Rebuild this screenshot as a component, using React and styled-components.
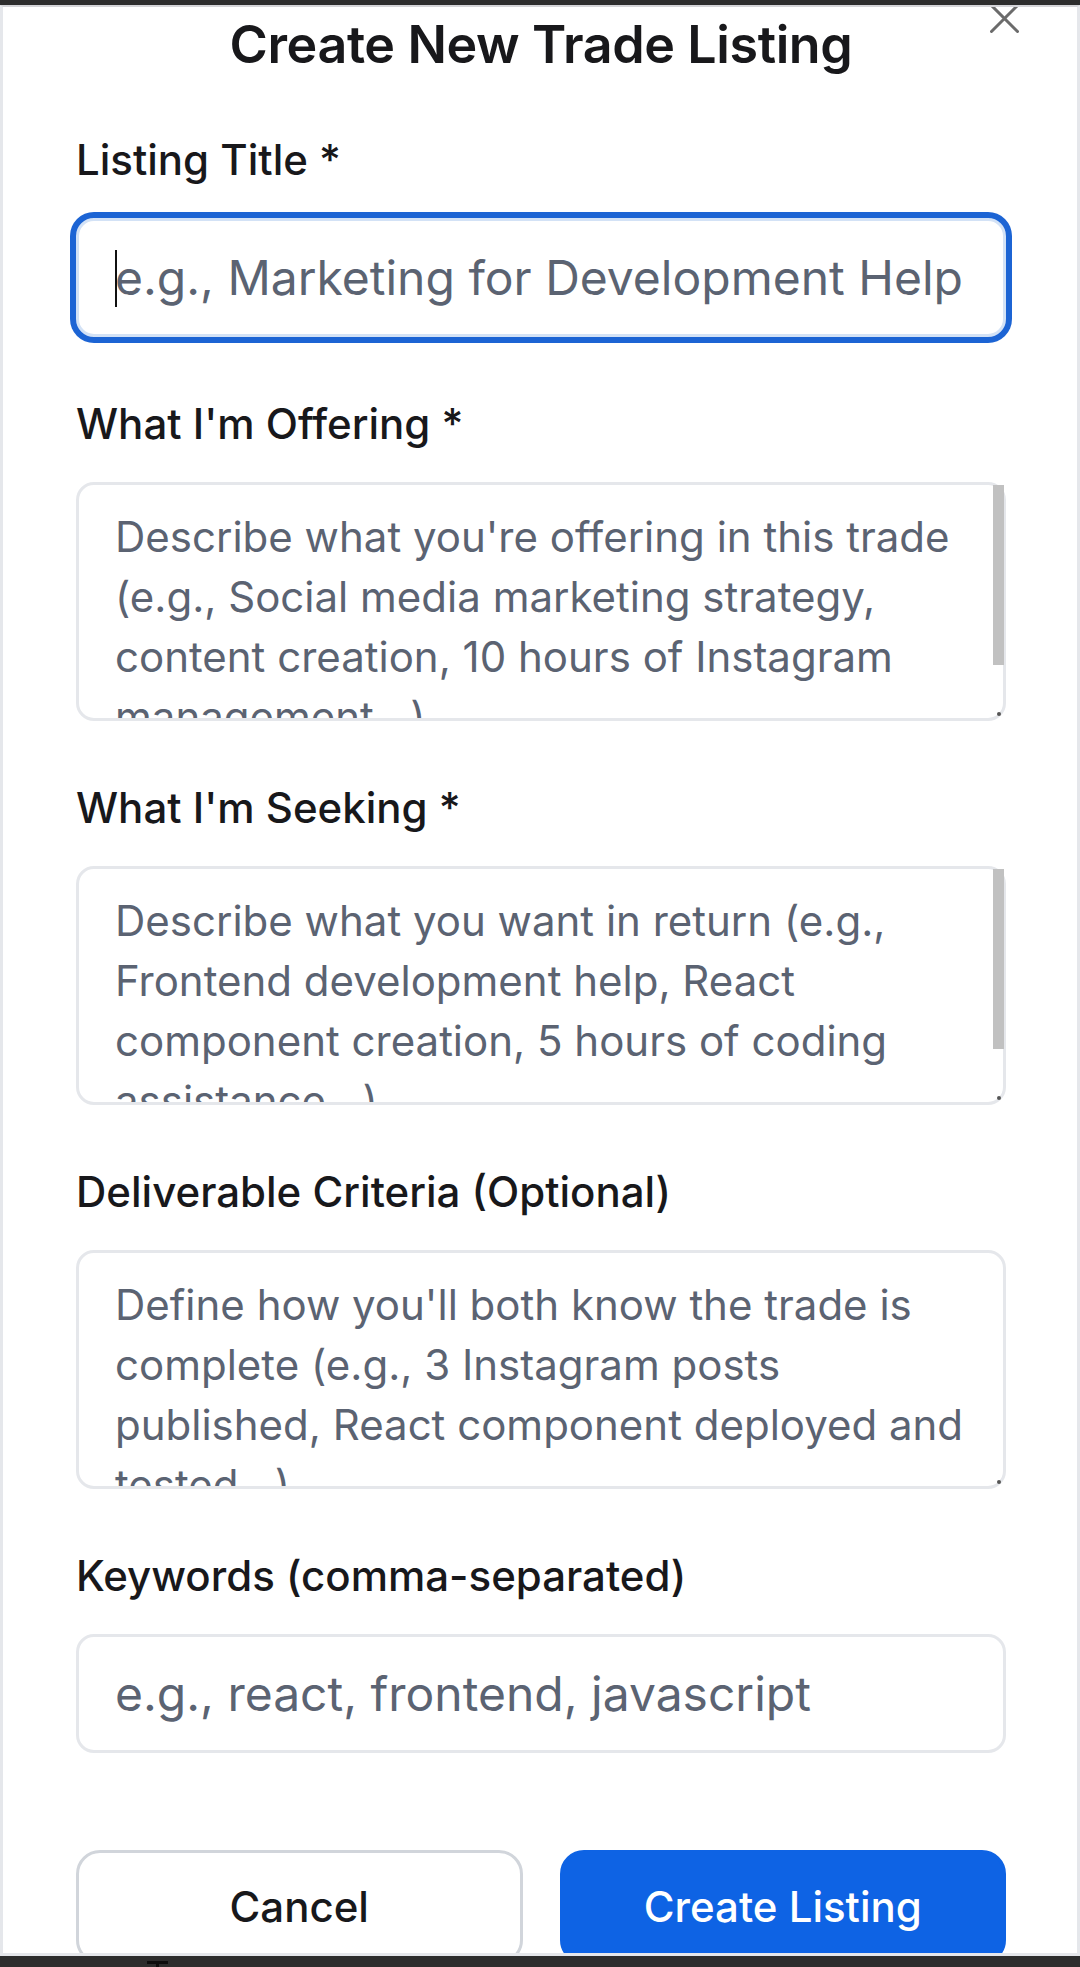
import React from "react";
import styled, { createGlobalStyle, css } from "styled-components";

const GlobalStyle = createGlobalStyle`
  html, body {
    margin: 0;
    padding: 0;
    background: #2d2d2d;
  }
  * {
    box-sizing: border-box;
  }
`;

const fields = [
  {
    id: "offering",
    label: "What I'm Offering *",
    placeholder:
      "Describe what you're offering in this trade (e.g., Social media marketing strategy, content creation, 10 hours of Instagram management...)",
    scroll: true,
  },
  {
    id: "seeking",
    label: "What I'm Seeking *",
    placeholder:
      "Describe what you want in return (e.g., Frontend development help, React component creation, 5 hours of coding assistance...)",
    scroll: true,
  },
  {
    id: "criteria",
    label: "Deliverable Criteria (Optional)",
    placeholder:
      "Define how you'll both know the trade is complete (e.g., 3 Instagram posts published, React component deployed and tested...)",
    scroll: false,
  },
];

export default function App() {
  return (
    <>
      <GlobalStyle />
      <Screen>
        <Panel>
          <CloseButton aria-label="Close">
            <svg width="29" height="29" viewBox="0 0 29 29">
              <path
                d="M1.5 1.5 L27.5 27.5 M27.5 1.5 L1.5 27.5"
                stroke="#6b6b6b"
                strokeWidth="3"
                strokeLinecap="round"
              />
            </svg>
          </CloseButton>
          <Content>
            <Title>Create New Trade Listing</Title>

            <Field>
              <Label htmlFor="title">Listing Title *</Label>
              <InputWrap>
                <Input
                  id="title"
                  $focused
                  placeholder="e.g., Marketing for Development Help"
                />
                <Caret />
              </InputWrap>
            </Field>

            {fields.map((f) => (
              <Field key={f.id}>
                <Label htmlFor={f.id}>{f.label}</Label>
                <AreaWrap>
                  <TextArea id={f.id} rows={3} placeholder={f.placeholder} />
                  {f.scroll && <ScrollThumb />}
                </AreaWrap>
              </Field>
            ))}

            <Field>
              <Label htmlFor="keywords">Keywords (comma-separated)</Label>
              <InputWrap>
                <Input
                  id="keywords"
                  placeholder="e.g., react, frontend, javascript"
                />
              </InputWrap>
            </Field>

            <Actions>
              <Button type="button">Cancel</Button>
              <Button type="button" $primary>
                Create Listing
              </Button>
            </Actions>
          </Content>
        </Panel>
        <BottomBar>
          <Beam />
        </BottomBar>
      </Screen>
    </>
  );
}

const Screen = styled.div`
  width: 1080px;
  height: 1967px;
  padding-top: 5px;
  display: flex;
  flex-direction: column;
  background: #2d2d2d;
  font-family: Inter, "Noto Sans", sans-serif;
  overflow: hidden;
`;

const Panel = styled.div`
  position: relative;
  height: 1951px;
  flex-shrink: 0;
  background: #ffffff;
  border-top: 2px solid #d4d4d8;
  border-left: 3px solid #e5e7eb;
  border-right: 3px solid #e5e7eb;
  border-bottom: 3px solid #e5e7eb;
  overflow: hidden;
`;

const CloseButton = styled.button`
  position: absolute;
  top: -3px;
  right: 58px;
  width: 29px;
  height: 29px;
  padding: 0;
  border: 0;
  background: none;
  display: flex;
  z-index: 2;
`;

const Content = styled.div`
  margin-top: -4px;
  padding: 0 71px 0 73px;
  display: flex;
  flex-direction: column;
`;

const Title = styled.h2`
  margin: 0 0 43px;
  font-size: 52px;
  line-height: 84px;
  font-weight: 600;
  letter-spacing: -0.4px;
  color: #18181b;
  text-align: center;
`;

const Field = styled.div`
  display: flex;
  flex-direction: column;
  margin-bottom: 57px;
`;

const Label = styled.label`
  font-size: 42px;
  line-height: 60px;
  font-weight: 500;
  color: #18181b;
  margin-bottom: 28px;
`;

const InputWrap = styled.div`
  position: relative;
`;

const placeholderStyle = css`
  &::placeholder {
    color: #5b6372;
    opacity: 1;
  }
`;

const Input = styled.input`
  width: 100%;
  height: 119px;
  padding: 0 36px;
  font-family: inherit;
  font-size: 48px;
  color: #18181b;
  background: #ffffff;
  border-radius: 18px;
  outline: none;
  border: 3px solid ${(p) => (p.$focused ? "#d3e2f6" : "#e5e7eb")};
  box-shadow: ${(p) => (p.$focused ? "0 0 0 6px #1c64d4" : "none")};
  ${placeholderStyle}
`;

const Caret = styled.span`
  position: absolute;
  left: 39px;
  top: 32px;
  width: 2px;
  height: 57px;
  background: #111111;
`;

const AreaWrap = styled.div`
  position: relative;
  height: 239px;

  &::after {
    content: "";
    position: absolute;
    right: 5px;
    bottom: 5px;
    width: 4px;
    height: 4px;
    border-radius: 50%;
    background: #555;
  }
`;

const TextArea = styled.textarea`
  display: block;
  width: 100%;
  height: 239px;
  padding: 22px 36px;
  font-family: inherit;
  font-size: 42px;
  line-height: 60px;
  color: #18181b;
  background: #ffffff;
  border: 3px solid #e5e7eb;
  border-radius: 18px;
  outline: none;
  resize: none;
  overflow: hidden;
  ${placeholderStyle}
`;

const ScrollThumb = styled.div`
  position: absolute;
  top: 3px;
  right: 2px;
  width: 11px;
  height: 180px;
  background: #c1c1c1;
`;

const Actions = styled.div`
  display: flex;
  gap: 37px;
  margin-top: 40px;
`;

const Button = styled.button`
  flex: 1;
  height: 114px;
  padding: 0;
  font-family: inherit;
  font-size: 42px;
  font-weight: 500;
  line-height: 60px;
  border-radius: 24px;
  border: 3px solid ${(p) => (p.$primary ? "#0e63e4" : "#d1d5db")};
  background: ${(p) => (p.$primary ? "#0e63e4" : "#ffffff")};
  color: ${(p) => (p.$primary ? "#ffffff" : "#18181b")};
`;

const BottomBar = styled.div`
  flex: 1;
  position: relative;
  background: #2d2d2d;
`;

const Beam = styled.div`
  position: absolute;
  left: 147px;
  top: 5px;
  width: 21px;
  height: 3px;
  background: #0d0d0d;

  &::after {
    content: "";
    position: absolute;
    left: 9px;
    top: 0;
    width: 3px;
    height: 12px;
    background: #0d0d0d;
  }
`;
